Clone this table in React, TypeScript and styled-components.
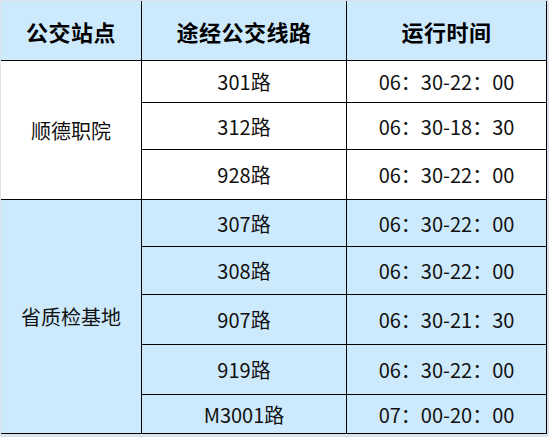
import React from "react";
import styled, { createGlobalStyle } from "styled-components";

const GlobalStyle = createGlobalStyle`
  html, body {
    margin: 0;
    padding: 0;
    background: #dbe2ec;
  }
  body {
    width: 549px;
    height: 437px;
    overflow: hidden;
    font-family: "Noto Sans CJK SC", "Noto Sans", sans-serif;
  }
`;

const Frame = styled.div`
  padding: 1px 0 0 1px;
`;

const Grid = styled.div`
  display: grid;
  grid-template-columns: 140px 204px 199px;
  grid-template-rows: 59px 41px 46px 49px 46px 47px 49px 49px 38px;
  gap: 1px;
  width: max-content;
  padding: 0 1px 1px 0;
  background: #000;
`;

const BLUE = "#cdeafd";

const HeaderCell = styled.div`
  display: flex;
  align-items: center;
  justify-content: center;
  background: ${BLUE};
  color: #000;
  font-size: 22px;
  font-weight: 700;
  letter-spacing: 0.5px;
`;

const StationCell = styled.div<{ $span: number; $tone: string }>`
  grid-column: 1;
  grid-row: span ${(p) => p.$span};
  display: flex;
  align-items: center;
  justify-content: center;
  background: ${(p) => p.$tone};
  color: #111;
  font-size: 20px;
  letter-spacing: 0;
`;

const Cell = styled.div<{ $tone: string; $col: number }>`
  grid-column: ${(p) => p.$col};
  display: flex;
  align-items: center;
  justify-content: center;
  background: ${(p) => p.$tone};
  color: #111;
  font-size: 20px;
`;

type Section = { name: string; tone: string; routes: [string, string][] };

const sections: Section[] = [
  {
    name: "顺德职院",
    tone: "#ffffff",
    routes: [
      ["301路", "06：30-22：00"],
      ["312路", "06：30-18：30"],
      ["928路", "06：30-22：00"],
    ],
  },
  {
    name: "省质检基地",
    tone: BLUE,
    routes: [
      ["307路", "06：30-22：00"],
      ["308路", "06：30-22：00"],
      ["907路", "06：30-21：30"],
      ["919路", "06：30-22：00"],
      ["M3001路", "07：00-20：00"],
    ],
  },
];

export default function App() {
  return (
    <>
      <GlobalStyle />
      <Frame>
        <Grid>
          <HeaderCell>公交站点</HeaderCell>
          <HeaderCell>途经公交线路</HeaderCell>
          <HeaderCell>运行时间</HeaderCell>
          {sections.map((s) => (
            <React.Fragment key={s.name}>
              <StationCell $span={s.routes.length} $tone={s.tone}>
                {s.name}
              </StationCell>
              {s.routes.map(([route, time]) => (
                <React.Fragment key={route}>
                  <Cell $tone={s.tone} $col={2}>{route}</Cell>
                  <Cell $tone={s.tone} $col={3}>{time}</Cell>
                </React.Fragment>
              ))}
            </React.Fragment>
          ))}
        </Grid>
      </Frame>
    </>
  );
}
